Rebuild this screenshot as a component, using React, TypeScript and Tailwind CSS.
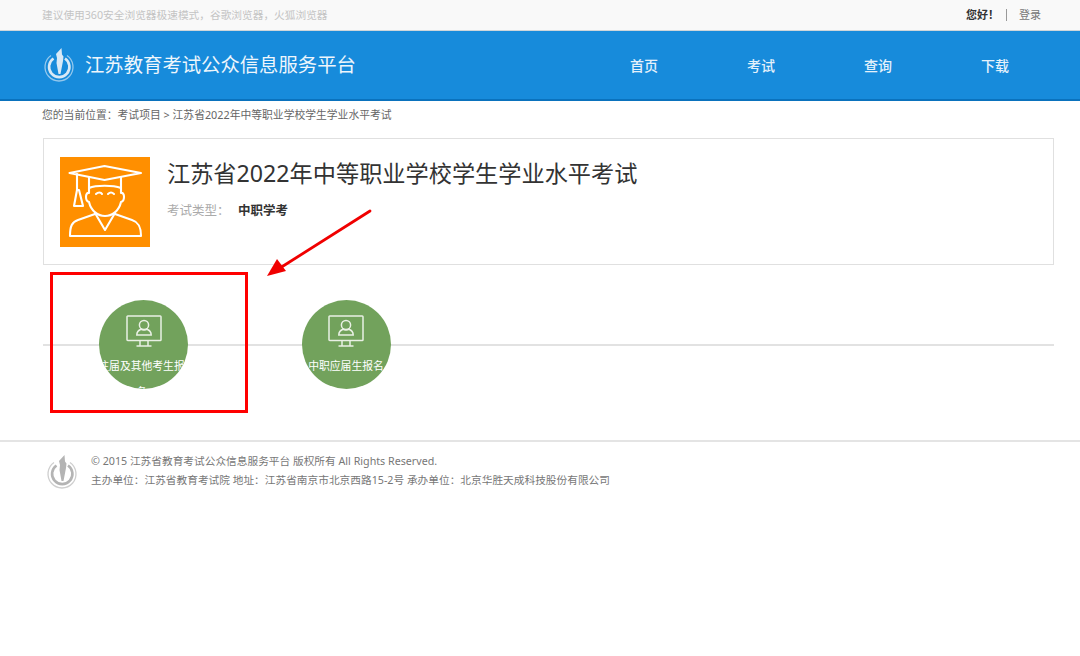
import React from "react";

function Logo({ color }: { color: string }) {
  return (
    <svg width="32" height="36" viewBox="0 0 32 36" fill="none" className="shrink-0">
      <path d="M8 8.5A14 14 0 1 0 24 8.5" stroke={color} strokeWidth="1.3" opacity="0.65" />
      <path d="M10.5 11.5A10.2 10.2 0 1 0 22 11.5" stroke={color} strokeWidth="2.6" />
      <path d="M13 7 L18.5 1 L19 7.5 L20.5 9.5 L20 14 L17.5 27 L15.5 27 L13.5 16 L14 11 Z" fill={color} />
    </svg>
  );
}

function GradIcon() {
  return (
    <svg width="90" height="90" viewBox="0 0 90 90" fill="none" stroke="white" strokeWidth="2.1" strokeLinejoin="round" strokeLinecap="round">
      <path d="M9.5 16 L44.5 9 L81 16 L44.5 23 Z" />
      <path d="M29 20 V31 C36 28 53 28 61 31 V20" />
      <path d="M17 17 V33 M17 33 L14 49 H23 L19 33 Z" />
      <path d="M29 31 V36 C25 35 25 44 29 45 C31 54 38 59 45 59 C52 59 59 54 61 45 C65 44 65 35 61 36 V31" />
      <path d="M36 37 C38 35 41 35 42 37 M48 37 C50 35 52 35 54 37" />
      <path d="M35 56 L45 73 L55 56" />
      <path d="M35 57 L18 63 C12 65 10 69 10 79 H81 C81 69 78 65 72 63 L55 57" />
    </svg>
  );
}

function MonitorIcon() {
  return (
    <svg width="36" height="32" viewBox="0 0 36 32" fill="none" stroke="#e9f0e4" strokeWidth="1.5" className="shrink-0">
      <rect x="1" y="1" width="34" height="24.5" rx="0.8" />
      <circle cx="18" cy="10" r="4.6" />
      <path d="M10.8 20 C10.8 17 13 15 15 14.2 C16.5 15.4 19.5 15.4 21 14.2 C23 15 25.2 17 25.2 20 Z" />
      <path d="M14 25.5 V31 M22 25.5 V31 M10.5 31 H25.5" />
    </svg>
  );
}

function ExamCircle({ label, shift }: { label: string; shift?: boolean }) {
  return (
    <div className="w-[89px] h-[89px] rounded-full bg-[#72a25c] overflow-hidden flex flex-col items-center pt-[15px] shrink-0 relative z-10">
      <MonitorIcon />
      <div className={(shift ? "-ml-[4px] " : "") + "w-[89px] shrink-0 text-center text-white text-[10.8px] leading-[26px] mt-[6px]"}>{label}</div>
    </div>
  );
}

export default function App() {
  return (
    <div className="w-[1080px] h-[656px] bg-white overflow-hidden relative font-['Noto_Sans','Noto_Sans_CJK_SC',sans-serif]">
      <div className="h-[31px] bg-[#f9f9f9] border-b border-[#cfd6da] flex items-center justify-between pl-[42px] pr-[39px]">
        <span className="text-[10.7px] text-[#c4c4c4]">建议使用360安全浏览器极速模式，谷歌浏览器，火狐浏览器</span>
        <div className="flex items-center text-[11px]">
          <span className="font-bold text-[#333]">您好！</span>
          <span className="w-px h-[12px] bg-[#999] ml-[7px] mr-[12px]" />
          <span className="text-[#777]">登录</span>
        </div>
      </div>

      <header className="h-[70px] bg-[#178bdb] border-b-2 border-[#0a72bd] flex items-center pl-[43px]">
        <Logo color="#d8e9f6" />
        <span className="ml-[10px] text-[19.35px] text-[#eef6fc] w-[272px] whitespace-nowrap">江苏教育考试公众信息服务平台</span>
        <nav className="ml-[273px] flex gap-[89px] text-[14px] font-medium text-[#e4f1fb]">
          <span>首页</span>
          <span>考试</span>
          <span>查询</span>
          <span>下载</span>
        </nav>
      </header>

      <div className="pl-[42px] pt-[6px] text-[10.8px] leading-[16px] text-[#666]">您的当前位置：考试项目 &gt; 江苏省2022年中等职业学校学生学业水平考试</div>

      <section className="ml-[43px] mt-[15px] w-[1011px] h-[127px] border border-[#e0e0e0] flex pl-[16px] pt-[18px]">
        <div className="w-[90px] h-[90px] bg-[#ff8f00] shrink-0"><GradIcon /></div>
        <div className="ml-[17px]">
          <h1 className="text-[23.2px] leading-[32px] text-[#333]">江苏省2022年中等职业学校学生学业水平考试</h1>
          <div className="mt-[13px] flex text-[12.5px] leading-[18px]">
            <span className="text-[#aaa] w-[71px]">考试类型：</span>
            <span className="font-bold text-[#333]">中职学考</span>
          </div>
        </div>
      </section>

      <section className="relative ml-[43px] w-[1011px] mt-[35px] h-[89px] pl-[56px] flex gap-[113.5px]">
        <div className="absolute left-0 right-0 top-[44px] h-[2px] bg-[#e2e2e2]" />
        <ExamCircle label="往届及其他考生报名" shift />
        <ExamCircle label="中职应届生报名" />
      </section>

      <footer className="mt-[51px] border-t-2 border-[#e4e4e4] pl-[46px] pt-[12px] flex">
        <Logo color="#b4b4b4" />
        <div className="ml-[13px] text-[10.7px] leading-[19px] text-[#777] -mt-[2px]">
          <div>© 2015 江苏省教育考试公众信息服务平台 版权所有 All Rights Reserved.</div>
          <div>主办单位：江苏省教育考试院 地址：江苏省南京市北京西路15-2号 承办单位：北京华胜天成科技股份有限公司</div>
        </div>
      </footer>

      <div className="absolute left-[50px] top-[272px] w-[198px] h-[141px] border-[3px] border-[#ff0000] z-20" />
      <svg className="absolute left-[260px] top-[205px] z-20" width="115" height="76" viewBox="0 0 115 76" fill="none">
        <path d="M110 6 L20 63" stroke="#f00000" strokeWidth="2.8" strokeLinecap="round" />
        <path d="M7 71 L17 54 L26 66 Z" fill="#f00000" />
      </svg>
    </div>
  );
}
